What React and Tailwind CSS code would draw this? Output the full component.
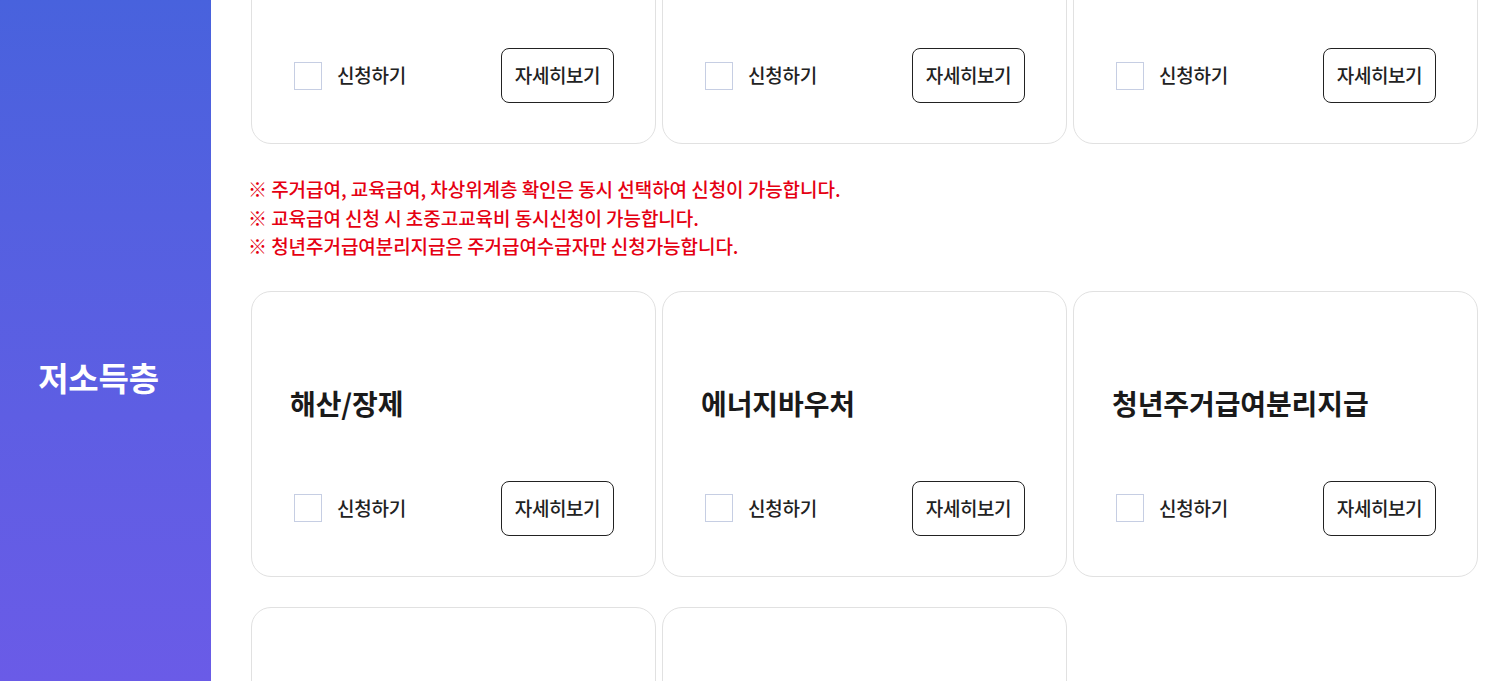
import React, { useState } from 'react';

const FONT = { fontFamily: '"Noto Sans CJK KR", "Noto Sans", sans-serif' };

const topRow = ['주거급여', '교육급여', '차상위계층 확인'];
const midRows = ['해산/장제', '에너지바우처', '청년주거급여분리지급', '긴급복지', '기타지원'];

const notes = [
  '※ 주거급여, 교육급여, 차상위계층 확인은 동시 선택하여 신청이 가능합니다.',
  '※ 교육급여 신청 시 초중고교육비 동시신청이 가능합니다.',
  '※ 청년주거급여분리지급은 주거급여수급자만 신청가능합니다.',
];

const ServiceCard = ({ title }) => {
  const [checked, setChecked] = useState(false);
  return (
    <div className="h-[286px] bg-white border border-[#e1e1e1] rounded-[20px] flex flex-col pl-[42px] pr-[41px] pt-[91px] pb-[40px]">
      <h3 className="-ml-[4px] text-[28px] leading-[40px] font-bold text-[#1a1a1a] tracking-[-0.1px]">{title}</h3>

      <div className="mt-auto flex items-center justify-between">
        <label className="flex items-center gap-[15px] cursor-pointer">
          <span
            onClick={() => setChecked(!checked)}
            className={`w-[28px] h-[28px] border border-[#c6cee3] ${checked ? 'bg-[#4a62dd]' : 'bg-white'}`}
          />
          <span className="text-[19px] font-medium text-[#222] tracking-[-0.2px]">신청하기</span>
        </label>
        <button className="w-[113px] h-[55px] border border-[#222] rounded-[8px] text-[19px] font-medium text-[#222] tracking-[-0.4px] bg-white">
          자세히보기
        </button>
      </div>
    </div>
  );
};

export default function App() {
  return (
    <div className="w-[1491px] h-[681px] overflow-hidden bg-white flex" style={FONT}>
      {/* Category sidebar */}
      <aside className="w-[211px] shrink-0 bg-gradient-to-b from-[#4862dd] to-[#6a5be7] flex justify-center pt-[354px] pr-[14px]">
        <h2 className="text-[33px] leading-[46px] font-bold text-white tracking-[-0.2px]">저소득층</h2>
      </aside>

      {/* Service cards */}
      <main className="flex-1 pl-[40px] pr-[13px] mt-[-142px]">
        <div className="grid grid-cols-3 gap-[6px]">
          {topRow.map((t) => (
            <ServiceCard key={t} title={t} />
          ))}
        </div>

        <div className="-ml-[3px] mt-[31px] mb-[30px] text-[19px] leading-[28.5px] font-medium text-[#e50012] tracking-[-0.05px]">
          {notes.map((n) => (
            <p key={n}>{n}</p>
          ))}
        </div>

        <div className="grid grid-cols-3 gap-x-[6px] gap-y-[30px]">
          {midRows.map((t) => (
            <ServiceCard key={t} title={t} />
          ))}
        </div>
      </main>
    </div>
  );
}
